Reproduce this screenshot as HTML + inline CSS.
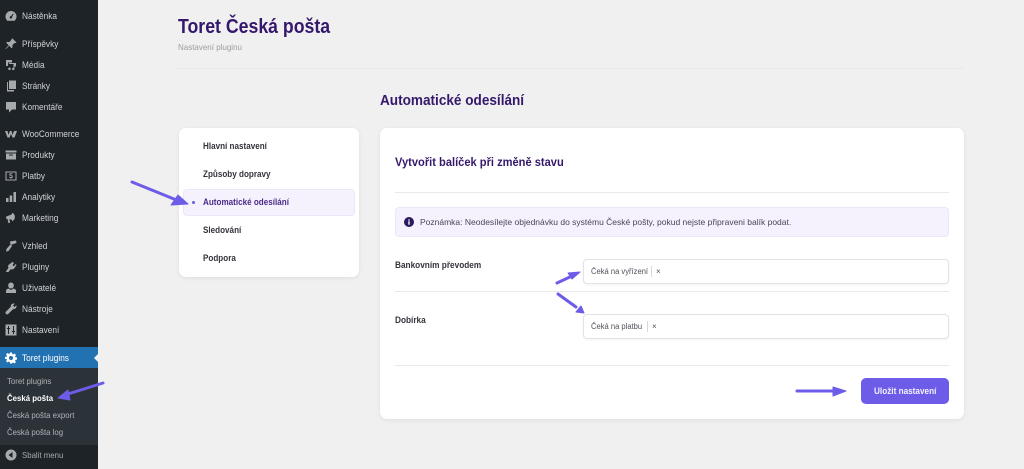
<!DOCTYPE html>
<html lang="cs"><head><meta charset="utf-8"><title>Toret Česká pošta</title>
<style>
html,body{margin:0;padding:0;width:1024px;height:469px;overflow:hidden;background:#f0f0f0;font-family:"Liberation Sans",sans-serif}
*{box-sizing:border-box}
.a{position:absolute;white-space:nowrap}
.sx{transform-origin:0 50%}
#side{position:absolute;left:0;top:0;width:98px;height:469px;background:#1d2327}
.m{position:absolute;left:22px;font-size:9px;line-height:14px;color:#cfd2d5;white-space:nowrap;transform:scaleX(.92);transform-origin:0 50%}
.s{position:absolute;left:7px;font-size:8.5px;line-height:14px;color:#aeb3b8;white-space:nowrap;transform:scaleX(.92);transform-origin:0 50%}
.i{position:absolute;left:5px;width:12px;height:12px;fill:#a7aaad}
.card{position:absolute;background:#fff;border-radius:7px;box-shadow:0 1px 5px rgba(0,0,0,.08)}
.n{position:absolute;left:203px;font-size:9px;line-height:14px;font-weight:bold;color:#34343c;white-space:nowrap;transform:scaleX(.9);transform-origin:0 50%}
.f{position:absolute;left:395px;font-size:9px;line-height:14px;font-weight:bold;color:#34343c;white-space:nowrap;transform:scaleX(.917);transform-origin:0 50%}
.hr{position:absolute;height:1px;background:#e9e9ec}
.inp{position:absolute;left:583px;width:366px;height:25px;background:#fff;border:1px solid #e2e2e8;border-radius:4px;box-shadow:0 1px 2px rgba(0,0,0,.05)}
.t{position:absolute;top:5px;left:7px;font-size:8px;line-height:14px;color:#50505a;white-space:nowrap;transform:scaleX(.95);transform-origin:0 50%}
.x{position:absolute;top:5px;font-size:8px;line-height:14px;color:#50505a}
.sep{position:absolute;top:6px;width:1px;height:11px;background:#d8d8dc}
</style></head><body>
<div id="side"></div>
<div class="a" style="left:0;top:347px;width:98px;height:21px;background:#2271b1"></div>
<div class="a" style="left:0;top:368px;width:98px;height:77px;background:#2c3338"></div>
<div class="a" style="left:94px;top:353px;width:0;height:0;border:5px solid transparent;border-right-color:#f0f0f0;border-left:0"></div>

<svg class="i" style="top:10px" viewBox="0 0 12 12"><path fill-rule="evenodd" d="M6 1a5.500 5.500 0 0 0-5.500 5.500c0 1.800.8 3.200 1.800 4.200h7.400c1-1 1.800-2.400 1.800-4.200A5.500 5.500 0 0 0 6 1zm0 5.200 2-2.700.6.500-1.600 3a1.200 1.200 0 1 1-1-.8z"/></svg><div class="m" style="top:9px">Nástěnka</div>
<svg class="i" style="top:38px" viewBox="0 0 12 12"><path d="M7.500.5l4 4-1 .6-.8-.2-2.400 2.400.3 2-1 1-2.500-2.500L1 11l-.5-.5 3.200-3.200L1.200 4.800l1-1 2 .3L6.600 1.700l-.2-.8z"/></svg><div class="m" style="top:37px">Příspěvky</div>
<svg class="i" style="top:59px" viewBox="0 0 12 12"><path d="M1 1h6v2.500H3V7H1zM4 4h7v3.500h-1.500V10a1.200 1.200 0 1 1-1-1.200V5H4zM4.500 8.500a1.300 1.300 0 1 1 0 2.600 1.300 1.300 0 0 1 0-2.600z"/></svg><div class="m" style="top:58px">Média</div>
<svg class="i" style="top:80px" viewBox="0 0 12 12"><path d="M4 .5h7v8.500H4zM3 2v8h6v1.500H2V2z"/></svg><div class="m" style="top:79px">Stránky</div>
<svg class="i" style="top:101px" viewBox="0 0 12 12"><path d="M1 1h10v7.500H7L4 11.500V8.500H1z"/></svg><div class="m" style="top:100px">Komentáře</div>
<svg class="i" style="top:128px" viewBox="0 0 12 12"><path d="M0 3h2.500l1 4 1.500-4h1.500l1 4 1.500-4H12L9.500 9.500H7.500L6 6 4.500 9.500H2.500z"/></svg><div class="m" style="top:127px">WooCommerce</div>
<svg class="i" style="top:149px" viewBox="0 0 12 12"><path fill-rule="evenodd" d="M.5 1.500h11v2H.5zM1 4.500h10V10.500H1zM4 5.500v1h4v-1z"/></svg><div class="m" style="top:148px">Produkty</div>
<svg class="i" style="top:170px" viewBox="0 0 12 12"><path fill-rule="evenodd" d="M.5 1.500h11v9H.5zm1 1v7h9v-7zM6 3.200c-1.200 0-1.800.6-1.800 1.300 0 1.600 2.600 1 2.600 2 0 .8-1.600.6-2.500.1v1c.4.200.8.300 1.200.4v.6h1v-.6c.9-.2 1.300-.8 1.300-1.500 0-1.500-2.500-1.100-2.500-2 0-.6 1.100-.5 2-.1V3.500z"/></svg><div class="m" style="top:169px">Platby</div>
<svg class="i" style="top:191px" viewBox="0 0 12 12"><path d="M1 7h2.500v4H1zM4.700 4.500h2.500V11H4.700zM8.500 1H11v10H8.500z"/></svg><div class="m" style="top:190px">Analytiky</div>
<svg class="i" style="top:212px" viewBox="0 0 12 12"><path d="M7 .8a4.500 4.500 0 0 1 0 8.400V7.800L1 6.600v-1.800L7 2.200zM2.500 7l2 .4.500 3.600H3.400z"/></svg><div class="m" style="top:211px">Marketing</div>
<svg class="i" style="top:240px" viewBox="0 0 12 12"><path d="M5 1.500l6-1 .5 2.500-6 2zM4.500 5.500 6 4.500 7 6 3.500 11 1 11.500 1.500 9z"/></svg><div class="m" style="top:239px">Vzhled</div>
<svg class="i" style="top:261px" viewBox="0 0 12 12"><path d="M7.500 1 9 2 7.500 4.300l1.500 1L10.500 3l1 1L9.500 7C8.500 8.500 7 8.800 5.500 8.300L3.500 11H1l.5-1.500 2-2.500C2.800 5.500 3 4.300 4 3.500z"/></svg><div class="m" style="top:260px">Pluginy</div>
<svg class="i" style="top:282px" viewBox="0 0 12 12"><path d="M6 .5a2.800 2.800 0 0 1 2.800 3c0 1.500-1 3-2.800 3s-2.800-1.500-2.800-3A2.800 2.800 0 0 1 6 .5zM3.500 6.500 6 8l2.500-1.500c1.500.4 2.500 1 2.500 2.500v2H1V9c0-1.500 1-2.100 2.500-2.500z"/></svg><div class="m" style="top:281px">Uživatelé</div>
<svg class="i" style="top:303px" viewBox="0 0 12 12"><path d="M8.500.5c-1.800 0-3 1.500-2.700 3.200L.8 8.800c-.5.600-.5 1.300 0 1.800l.5.500c.5.500 1.200.5 1.800 0l5-5c1.800.4 3.400-1 3.400-2.800 0-.4 0-.7-.2-1L9.500 4 8 2.500 9.800.7C9.400.6 9 .5 8.500.5z"/></svg><div class="m" style="top:302px">Nástroje</div>
<svg class="i" style="top:324px" viewBox="0 0 12 12"><path fill-rule="evenodd" d="M.5.500h11v11H.5zM3 2v2H2v1h1v5h1V5h1V4H4V2zM8 2v5H7v1h1v2h1V8h1V7H9V2z"/></svg><div class="m" style="top:323px">Nastavení</div>
<svg class="i" style="top:352px;fill:#fff" viewBox="0 0 24 24"><path fill-rule="evenodd" d="M10 1h4l.6 3.100 1.900.8 2.700-1.800 2.800 2.800-1.800 2.700.8 1.900 3 .6v4l-3.100.6-.8 1.900 1.800 2.700-2.800 2.800-2.700-1.800-1.900.8L14 23h-4l-.6-3.100-1.900-.8-2.700 1.800-2.800-2.800 1.800-2.700-.8-1.900L0 14v-4l3.100-.6.800-1.900-1.800-2.700 2.800-2.800 2.700 1.800 1.900-.8zM12 8a4 4 0 1 0 0 8 4 4 0 0 0 0-8z"/></svg><div class="m" style="top:351px;color:#fff">Toret plugins</div>
<div class="s" style="top:374px">Toret plugins</div>
<div class="s" style="top:391px;color:#fff;font-weight:bold">Česká pošta</div>
<div class="s" style="top:408px">Česká pošta export</div>
<div class="s" style="top:425px">Česká pošta log</div>
<svg class="i" style="top:449px" viewBox="0 0 12 12"><path fill-rule="evenodd" d="M6 .5a5.500 5.500 0 1 1 0 11 5.500 5.500 0 0 1 0-11zM7.500 3 3.500 6l4 3z"/></svg><div class="m" style="top:448px;color:#a7aaad;font-size:8.500px">Sbalit menu</div>

<div class="a sx" style="left:178px;top:14px;font-size:20px;line-height:26px;font-weight:bold;color:#35186b;transform:scaleX(.885)">Toret Česká pošta</div>
<div class="a sx" style="left:178px;top:41px;font-size:8.500px;line-height:12px;color:#9a9da2;transform:scaleX(.94)">Nastavení pluginu</div>
<div class="hr" style="left:178px;top:68px;width:786px"></div>
<div class="a sx" style="left:380px;top:91px;font-size:15px;line-height:20px;font-weight:bold;color:#35186b;transform:scaleX(.905)">Automatické odesílání</div>

<div class="card" style="left:179px;top:128px;width:180px;height:149px"></div>
<div class="n" style="top:139px">Hlavní nastavení</div>
<div class="n" style="top:167px">Způsoby dopravy</div>
<div class="a" style="left:183px;top:189px;width:172px;height:27px;background:#f6f2fd;border:1px solid #ece6fa;border-radius:4px"></div>
<div class="a" style="left:192px;top:201px;width:3px;height:3px;border-radius:50%;background:#6c5ce7"></div>
<div class="n" style="top:195px;color:#4b2a87">Automatické odesílání</div>
<div class="n" style="top:223px">Sledování</div>
<div class="n" style="top:251px">Podpora</div>

<div class="card" style="left:380px;top:128px;width:584px;height:291px"></div>
<div class="a sx" style="left:395px;top:155px;font-size:11.500px;line-height:16px;font-weight:bold;color:#35186b;transform:scaleX(.966)">Vytvořit balíček při změně stavu</div>
<div class="hr" style="left:395px;top:192px;width:554px"></div>
<div class="a" style="left:395px;top:207px;width:554px;height:30px;background:#f6f2fd;border:1px solid #ece6fa;border-radius:4px"></div>
<svg class="a" style="left:404px;top:217px" width="10" height="10" viewBox="0 0 10 10"><circle cx="5" cy="5" r="5" fill="#2b1a5e"/><rect x="4.300" y="4.200" width="1.400" height="3.500" fill="#fff"/><rect x="4.300" y="2.300" width="1.400" height="1.300" fill="#fff"/></svg>
<div class="a" style="left:420px;top:215px;font-size:8.500px;line-height:14px;color:#4a4458">Poznámka: Neodesílejte objednávku do systému České pošty, pokud nejste připraveni balík podat.</div>
<div class="f" style="top:258px">Bankovním převodem</div>
<div class="hr" style="left:395px;top:291px;width:554px"></div>
<div class="f" style="top:313px">Dobírka</div>
<div class="inp" style="top:259px"><span class="t">Čeká na vyřízení</span><span class="sep" style="left:67px"></span><span class="x" style="left:72px">×</span></div>
<div class="inp" style="top:314px"><span class="t">Čeká na platbu</span><span class="sep" style="left:63px"></span><span class="x" style="left:68px">×</span></div>
<div class="hr" style="left:395px;top:365px;width:554px"></div>
<div class="a" style="left:861px;top:378px;width:88px;height:26px;border-radius:5px;background:#6c5ce7"></div>
<div class="a sx" style="left:874px;top:384px;color:#f3f1ff;font-size:9px;line-height:14px;font-weight:bold;transform:scaleX(.91)">Uložit nastavení</div>

<svg class="a" style="left:0;top:0;pointer-events:none" width="1024" height="469" viewBox="0 0 1024 469">
<g fill="#6c5ce7" stroke="#6c5ce7" stroke-linecap="round" stroke-linejoin="round">
<path d="M132 182 174 199" stroke-width="3" fill="none"/><path d="M178 195 188 204 171 205Z" stroke-width="1"/>
<path d="M103 383 68 394" stroke-width="3" fill="none"/><path d="M68 390 58 398 70 400Z" stroke-width="1"/>
<path d="M557 283 572 276" stroke-width="3" fill="none"/><path d="M568 273 580 272 572 279Z" stroke-width="1"/>
<path d="M558 294 576 307" stroke-width="3" fill="none"/><path d="M581 306 584 313 576 312Z" stroke-width="1"/>
<path d="M797 391 834 391" stroke-width="3" fill="none"/><path d="M833 387 846 391 833 396Z" stroke-width="1"/>
</g></svg>
</body></html>
